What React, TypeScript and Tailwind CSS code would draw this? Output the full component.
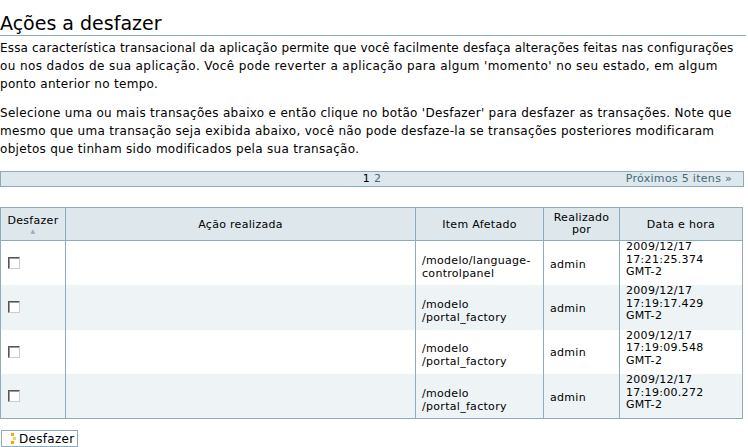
interface Transaction {
  path: [string, string];
  user: string;
  date: string;
  time: string;
}

const transactions: Transaction[] = [
  { path: ['/modelo/language-', 'controlpanel'], user: 'admin', date: '2009/12/17', time: '17:21:25.374' },
  { path: ['/modelo', '/portal_factory'], user: 'admin', date: '2009/12/17', time: '17:19:17.429' },
  { path: ['/modelo', '/portal_factory'], user: 'admin', date: '2009/12/17', time: '17:19:09.548' },
  { path: ['/modelo', '/portal_factory'], user: 'admin', date: '2009/12/17', time: '17:19:00.272' },
];

function Checkbox() {
  return (
    <span className="block h-[12px] w-[12px] border border-t-[#555] border-l-[#555] border-r-[#ccc] border-b-[#ccc] bg-white shadow-[inset_1px_1px_0_#999]" />
  );
}

export default function App() {
  return (
    <div className="min-h-[447px] bg-white text-[12px] leading-[18px] tracking-[0.3px] text-black font-['DejaVu_Sans',Verdana,sans-serif]">
      <h1 className="mt-[12px] mr-[2px] border-b border-[#8cacbb] text-[19px] leading-[23px] tracking-normal">
        Ações a desfazer
      </h1>

      <p className="mt-[3px] whitespace-nowrap tracking-[0.17px]">
        Essa característica transacional da aplicação permite que você facilmente desfaça alterações feitas nas configurações
        <br />
        <span className="tracking-[0.4px]">
          ou nos dados de sua aplicação. Você pode reverter a aplicação para algum 'momento' no seu estado, em algum
        </span>
        <br />
        <span className="tracking-[0.3px]">ponto anterior no tempo.</span>
      </p>

      <p className="mt-[11px] whitespace-nowrap">
        Selecione uma ou mais transações abaixo e então clique no botão 'Desfazer' para desfazer as transações. Note que
        <br />
        mesmo que uma transação seja exibida abaixo, você não pode desfaze-la se transações posteriores modificaram
        <br />
        objetos que tinham sido modificados pela sua transação.
      </p>

      <div className="relative mt-[13px] mr-[4px] flex h-[16px] items-center justify-center border border-[#8cacbb] bg-[#dee7ec] text-[11px] leading-[14px]">
        <span>
          1 <a className="text-[#436976]">2</a>
        </span>
        <a className="absolute right-[11px] text-[#436976]">Próximos 5 itens »</a>
      </div>

      <table className="mt-[20px] w-[743px] border-collapse border border-[#8cacbb] text-[11px] leading-[13px]">
        <thead>
          <tr className="h-[33px] bg-[#dee7ec]">
            <th className="w-[65px] border border-[#8cacbb] align-middle font-normal">
              <div className="flex flex-col items-center">
                <span>Desfazer</span>
                <span className="text-[6px] leading-[8px] text-[#9ab]">▲</span>
              </div>
            </th>
            <th className="w-[350px] border border-[#8cacbb] font-normal">Ação realizada</th>
            <th className="w-[128px] border border-[#8cacbb] font-normal">Item Afetado</th>
            <th className="w-[76px] border border-[#8cacbb] font-normal leading-[12px]">
              Realizado
              <br />
              por
            </th>
            <th className="border border-[#8cacbb] font-normal">Data e hora</th>
          </tr>
        </thead>
        <tbody>
          {transactions.map((t, i) => (
            <tr key={i} className={`h-[44.5px] ${i % 2 === 1 ? 'bg-[#eef3f5]' : 'bg-white'}`}>
              <td className="border-x border-[#8cacbb] pl-[7px]">
                <Checkbox />
              </td>
              <td className="border-x border-[#8cacbb]" />
              <td className="border-x border-[#8cacbb] pl-[6px] pt-[7px]">
                {t.path[0]}
                <br />
                {t.path[1]}
              </td>
              <td className="border-x border-[#8cacbb] pl-[6px] pt-[2px]">{t.user}</td>
              <td className="border-x border-[#8cacbb] pl-[6px] align-top leading-[12.5px]">
                {t.date}
                <br />
                {t.time}
                <br />
                GMT-2
              </td>
            </tr>
          ))}
        </tbody>
      </table>

      <button className="mt-[11px] ml-[1px] flex h-[17px] items-center gap-[3px] border border-[#8cacbb] bg-white pl-[9px] pr-[3px] text-[12px] leading-[14px]">
        <span className="flex flex-col gap-[1px]">
          <span className="h-[3px] w-[3px] bg-[#ffa500]" />
          <span className="ml-[2px] h-[3px] w-[3px] bg-[#ffcc66]" />
          <span className="h-[3px] w-[3px] bg-[#ffa500]" />
        </span>
        Desfazer
      </button>
    </div>
  );
}
